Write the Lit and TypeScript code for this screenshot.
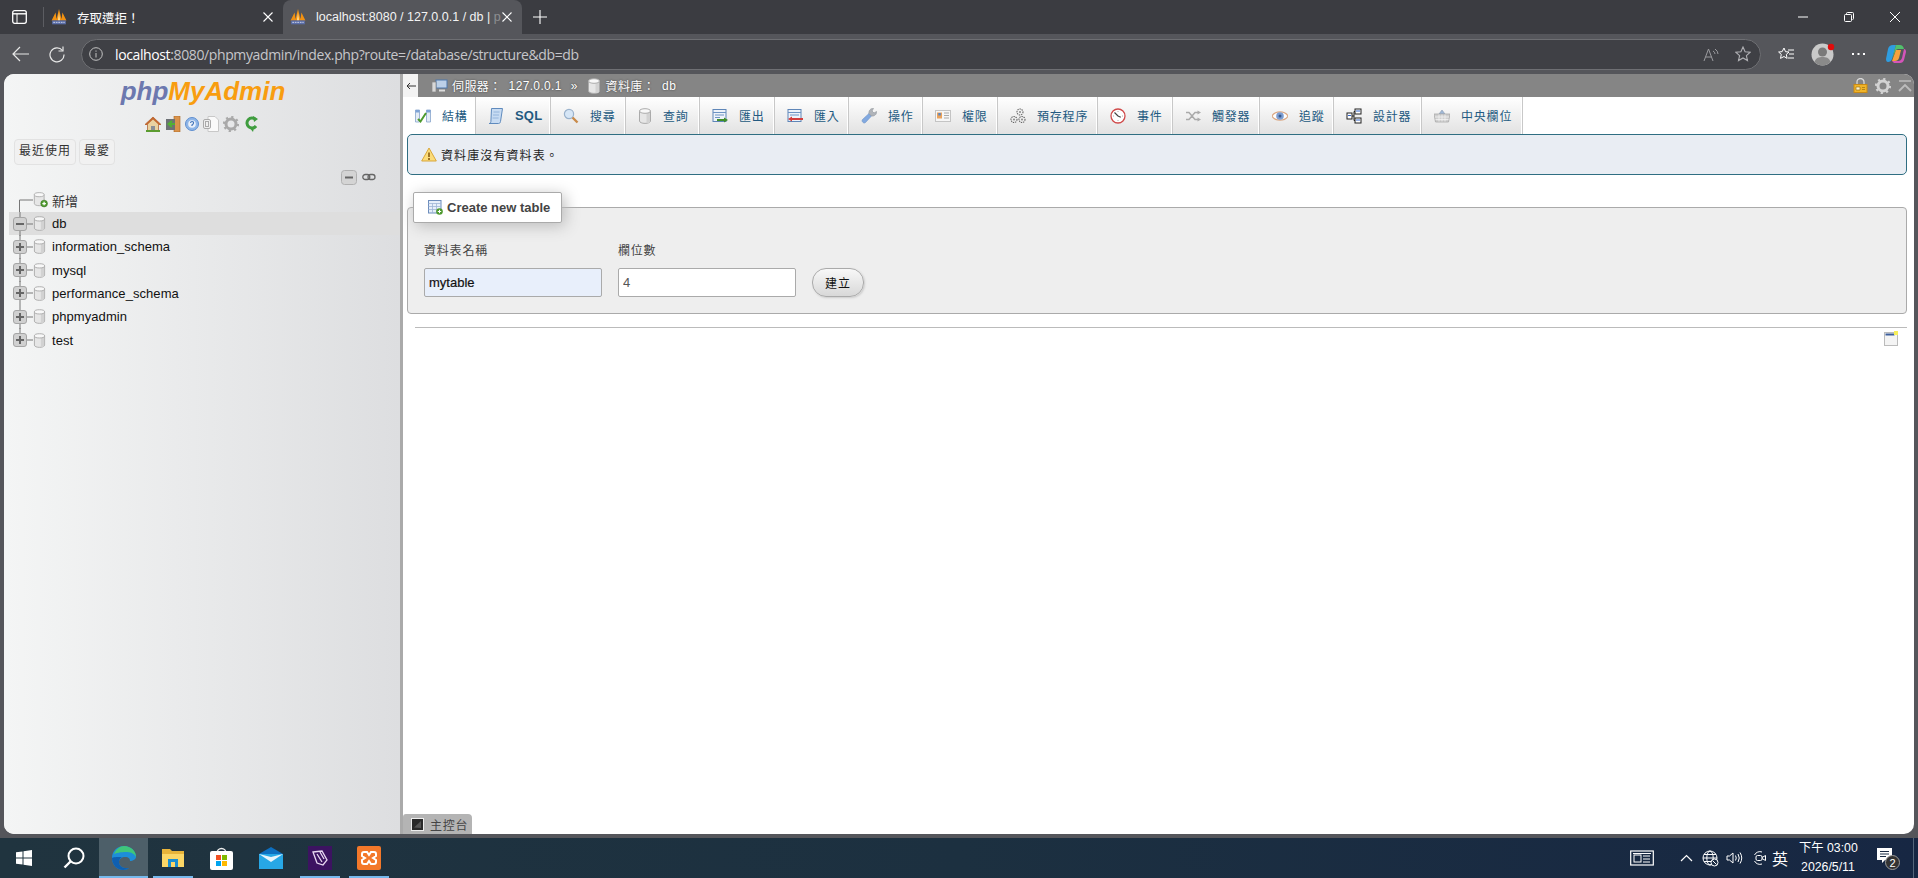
import { LitElement, html, css, svg } from 'lit';
import { customElement } from 'lit/decorators.js';

// small helper so every icon is an inline svg of a given box
const ic = (w: number, h: number, body: unknown, cls = '') =>
  html`<svg class="ic ${cls}" width=${w} height=${h} viewBox="0 0 ${w} ${h}">${body}</svg>`;

const pmaFav = ic(14, 14, svg`
  <path d="M.5 10 4 3l1 7zM4.500 10 7 0l2.500 10zM9 10l1-7 3.500 7z" fill="#f29111"/>
  <path d="M6 10 7 3l1 7z" fill="#ffd98a"/>
  <rect x="1" y="10" width="12" height="3.400" fill="#5b6ea8"/>
  <path d="M2 11.700h10" stroke="#cfd6ea" stroke-width=".8" stroke-dasharray="1.500 .7"/>`);

const dbIcon = ic(14, 16, svg`
  <path d="M1.500 3v10c0 1.400 2.500 2.400 5.500 2.400s5.500-1 5.500-2.400V3z" fill="#e6e6e6" stroke="#ababab"/>
  <path d="M8.500 4v11h2.500l1-1V4z" fill="#d2d2d2"/>
  <ellipse cx="7" cy="3" rx="5.500" ry="2.300" fill="#f8f8f8" stroke="#ababab"/>`, 'db');

const dbAdd = ic(18, 18, svg`
  <path d="M1.500 3v10c0 1.400 2.500 2.400 5.500 2.400s5.500-1 5.500-2.400V3z" fill="#e6e6e6" stroke="#ababab"/>
  <ellipse cx="7" cy="3" rx="5.500" ry="2.300" fill="#f8f8f8" stroke="#ababab"/>
  <circle cx="12.500" cy="13" r="3.800" fill="#4f9a2f" stroke="#35701c" stroke-width=".6"/>
  <path d="M10.500 13h4M12.500 11v4" stroke="#fff" stroke-width="1.400"/>`, 'dbadd');

const tabIcons: Record<string, unknown> = {
  structure: ic(16, 16, svg`
    <path d="M.5 2h4v12h-4zM11.500 2h4v12h-4z" fill="#e4ecf6" stroke="#86a5cc" stroke-width=".8"/>
    <path d="M.5 2h4v2.500h-4zM11.500 2h4v2.500h-4z" fill="#7ea3d6"/>
    <path d="M3 11l2.500 2.500L11 5" stroke="#4d9a2d" stroke-width="2" fill="none"/>`),
  sql: ic(16, 18, svg`
    <path d="M3.500 1.500h11l-2 13c-.2 1.400-1 2-2 2H1c1 0 1.700-.6 1.900-2z" fill="#c7dbf2" stroke="#5f8abd"/>
    <path d="M5.500 5h6M5 8h6M4.600 11h6" stroke="#8fb0d8" stroke-width=".9"/>`),
  search: ic(16, 16, svg`
    <circle cx="6" cy="6" r="4.600" fill="#d6e6f6" stroke="#9ab2cc" stroke-width="1.200"/>
    <path d="M9.500 9.500l5 5" stroke="#c98b4a" stroke-width="2.400"/>`),
  query: dbIcon,
  export: ic(16, 16, svg`
    <rect x="1" y="1.500" width="13" height="12" fill="#eef3fa" stroke="#5f86b8"/>
    <path d="M1 4.500h13M3 7h9M3 9.500h5" stroke="#6e94c4"/>
    <path d="M5 12h8" stroke="#3f8f2a" stroke-width="2"/><path d="M12 9.500l4 2.500-4 2.500z" fill="#3f8f2a"/>`),
  import: ic(16, 16, svg`
    <rect x="1" y="1.500" width="13" height="12" fill="#eef3fa" stroke="#5f86b8"/>
    <path d="M1 4.500h13M3 7h9" stroke="#6e94c4"/>
    <path d="M4 11h12" stroke="#d33d3d" stroke-width="2"/><path d="M5 8.500 1 11l4 2.500z" fill="#d33d3d"/>`),
  ops: ic(16, 16, svg`
    <path d="M1.500 11.500 8 5.500l2.500 2.500-6 6.500c-1.500 1.500-4.500-1-3-3z" fill="#82a9e0" stroke="#6d93c8" stroke-width=".6"/>
    <path d="M8 5.500C7.500 3 9.500 0 12.500.5L11 3l2 2 2.500-1.500C16 6.500 13 8.500 10.500 8z" fill="#b0b4ba" stroke="#8f9399" stroke-width=".6"/>`),
  rights: ic(16, 12, svg`
    <rect x=".5" y=".5" width="15" height="11" fill="#f6f6f6" stroke="#c4c4c4"/>
    <rect x="2" y="2.500" width="5" height="6" fill="#eba25a"/><rect x="3.300" y="3" width="2.500" height="2.500" fill="#5a86c2"/>
    <path d="M9 3h5M9 5.500h5M9 8h5" stroke="#aaa"/>`),
  routines: ic(16, 16, svg`
    <g fill="none" stroke="#666" stroke-width="1.100" stroke-dasharray="1.400 .8">
    <circle cx="4" cy="11.500" r="3"/><circle cx="12" cy="11.500" r="3"/><circle cx="10" cy="4" r="3"/></g>
    <circle cx="4" cy="11.500" r="1" fill="#888"/><circle cx="12" cy="11.500" r="1" fill="#888"/><circle cx="10" cy="4" r="1" fill="#888"/>`),
  events: ic(16, 16, svg`
    <circle cx="8" cy="8" r="7" fill="#fff" stroke="#d04a4a" stroke-width="1.300"/>
    <path d="M4.500 4.500 8 8l2.800 1.200" stroke="#444" stroke-width="1.200" fill="none"/>
    <path d="M8 3v1M8 12v1M3 8h1M12 8h1" stroke="#999" stroke-width=".8"/>`),
  triggers: ic(16, 12, svg`
    <path d="M1 2.500h3l6 7h3M1 9.500h3l6-7h3" stroke="#aaa" stroke-width="1.500" fill="none"/>
    <path d="M12.500 .5 16 2.500l-3.500 2zM12.500 7.500l3.500 2-3.500 2z" fill="#aaa"/>`),
  track: ic(16, 12, svg`
    <path d="M0 6c3-5.500 13-5.500 16 0-3 5.500-13 5.500-16 0z" fill="#fff" stroke="#dba884" stroke-width="1.200"/>
    <circle cx="8" cy="6" r="3.800" fill="#7c9dd2"/><circle cx="8" cy="6" r="1.500" fill="#3a5a8a"/>`),
  designer: ic(16, 16, svg`
    <g fill="#fff" stroke="#222"><rect x="9" y="1" width="6" height="5"/><rect x="9" y="10" width="6" height="5"/><rect x="1" y="5" width="5" height="6"/></g>
    <path d="M6 8h2M8 3.500v9M8 3.500h1M8 12.500h1" stroke="#222" fill="none"/>
    <path d="M10 3h4M10 12h4M2 7.500h3" stroke="#36c"/>`),
  central: ic(16, 14, svg`
    <path d="M5 5 8 1l3 4z" fill="#9fb8d8" stroke="#8a9ab0" stroke-width=".6"/>
    <path d="M0 5h16l-1.500 8h-13z" fill="#cfcfcf" stroke="#a8a8a8" stroke-width=".8"/>
    <path d="M1 8h14M1.500 10.500h13M5 5.500v7M8 5.500v7M11 5.500v7" stroke="#f2f2f2" stroke-width=".8"/>`),
};

const tabs = [
  { key: 'structure', label: '結構', w: 73, active: true },
  { key: 'sql', label: 'SQL', w: 75 },
  { key: 'search', label: '搜尋', w: 75 },
  { key: 'query', label: '查詢', w: 74 },
  { key: 'export', label: '匯出', w: 75 },
  { key: 'import', label: '匯入', w: 74 },
  { key: 'ops', label: '操作', w: 74 },
  { key: 'rights', label: '權限', w: 75 },
  { key: 'routines', label: '預存程序', w: 100 },
  { key: 'events', label: '事件', w: 75 },
  { key: 'triggers', label: '觸發器', w: 87 },
  { key: 'track', label: '追蹤', w: 74 },
  { key: 'designer', label: '設計器', w: 88 },
  { key: 'central', label: '中央欄位', w: 101 },
];

const databases = [
  { name: 'db', open: true },
  { name: 'information_schema' },
  { name: 'mysql' },
  { name: 'performance_schema' },
  { name: 'phpmyadmin' },
  { name: 'test', last: true },
];

const gear = (c: string) => ic(16, 16, svg`
  <circle cx="8" cy="8" r="5" fill="none" stroke=${c} stroke-width="3"/>
  <circle cx="8" cy="8" r="7" fill="none" stroke=${c} stroke-width="2.200" stroke-dasharray="2.200 3.300"/>`);

const rail = (open: boolean, last: boolean) => ic(24, 24, svg`
  <path d="M11 0V${last ? 12 : 24}M18 12h6" stroke="#777" fill="none"/>
  <rect x="4.500" y="5.500" width="13" height="13" rx="2.500" fill="#d0d0d0" stroke="#a5a5a5"/>
  <path d="M7 12h8${open ? '' : 'M11 8v8'}" stroke="#666" stroke-width="2"/>`, 'rail');

@customElement('app-root')
export class AppRoot extends LitElement {
  static styles = css`
    :host { display: block; width: 1918px; height: 878px; overflow: hidden;
      font-family: "Liberation Sans", "Noto Sans CJK TC", sans-serif; }
    * { box-sizing: border-box; }
    .ic { display: block; flex: none; }
    .page { height: 878px; display: flex; flex-direction: column; background: #55565b; }

    /* browser chrome */
    .strip { height: 34px; background: #3b3c41; display: flex; align-items: center; color: #fff; font-size: 12.500px; }
    .panel { width: 44px; padding-left: 12px; border-right: 1px solid #5c5d62; height: 20px; display: flex; align-items: center; }
    .btab { width: 239px; height: 34px; display: flex; align-items: center; padding-left: 7px; }
    .btab .fav { margin-right: 10px; }
    .btab .fav svg { width: 16px; height: 16px; }
    .btab .title { flex: 1; white-space: nowrap; }
    .btab .x { width: 10px; margin-right: 10px; }
    .btab.cur { background: #55565b; border-radius: 8px 8px 0 0; }
    .btab.cur .title { color: #f3f3f3; }
    .btab.cur .title i { font-style: normal; opacity: .35; }
    .plus { margin-left: 11px; }
    .winbtns { margin-left: auto; display: flex; align-items: center; }
    .wmin, .wmax { margin-right: 36px; }
    .wclose { margin-right: 18px; }

    .bar { height: 40px; display: flex; align-items: center; padding-left: 12px; }
    .back { margin-right: 19px; }
    .reload { margin-right: 16px; }
    .addr { width: 1680px; height: 31px; border: 1px solid #6e6f73; border-radius: 16px; background: #3f4045;
      display: flex; align-items: center; padding: 0 9px 0 7px; margin-right: 17px; }
    .info { margin-right: 12px; }
    .url { font: 14px "Open Sans", sans-serif; color: #c6c6ca; letter-spacing: -0.380px; white-space: nowrap; flex: 1; }
    .url b { font-weight: 400; color: #fff; }
    .read { margin-right: 16px; }
    .tools { display: flex; align-items: center; }
    .favs { margin-right: 16px; }
    .avatar { margin-right: 17px; }
    .dots { margin-right: 20px; }

    /* viewport */
    .view { height: 760px; margin: 0 4px 4px; display: flex; border-radius: 10px; overflow: hidden; background: #fff; }
    .side { width: 396px; background: linear-gradient(90deg, #f4f5f5, #dddee0); display: flex; flex-direction: column; font-size: 13px; color: #111; }
    .split { width: 3px; background: #aaa; }
    .logo { height: 36px; padding: 2px 0 0 2px; text-align: center; font: italic bold 26px "Liberation Sans", sans-serif; color: #f89d10; }
    .logo span { color: #6c78af; }
    .navi { height: 27px; display: flex; justify-content: center; align-items: center; gap: 4px; padding-right: 2px; }
    .navi .rel { margin-left: 2px; }
    .recent { display: flex; gap: 3px; padding-left: 10px; margin-top: 2px; }
    .recent div { height: 26px; padding: 0 4px; background: #f1f1f1; border: 1px solid #e2e2e2; border-radius: 4px; font-size: 12px; letter-spacing: 1px; color: #333; line-height: 23px; }
    .ctl { display: flex; justify-content: flex-end; align-items: center; gap: 5px; padding-right: 24px; margin-top: 2px; height: 20px; }
    .tree { margin: 1.500px 0 0 5px; }
    .row { height: 23.330px; display: flex; align-items: center; }
    .row.on { background: #dedede; }
    .row .db { width: 13px; height: 15px; }
    .row .nm { margin-left: 6px; letter-spacing: .06px; }
    .row.add { padding-left: 9px; }
    .row.add .dbadd { width: 16px; height: 16px; }
    .row.add .nm { margin-left: 3px; color: #333; }

    .main { flex: 1; display: flex; flex-direction: column; position: relative; min-width: 0; }
    .crumb { height: 23px; background: #858585; display: flex; align-items: center; color: #fff; font-size: 12px; text-shadow: 0 0 2px #333; }
    .toggle { width: 15px; height: 23px; background: #f3f3f3; display: flex; align-items: center; justify-content: center; margin-right: 14px; }
    .srv { margin-right: 4px; }
    .crumb .db { margin-right: 5px; }
    .cjk { letter-spacing: .4px; }
    .crumb .v { margin-left: 7px; letter-spacing: .35px; }
    .crumb .sep { margin: 0 9px; }
    .rt { margin-left: auto; display: flex; align-items: center; gap: 7px; padding-right: 2px; }
    .tabs { height: 37px; display: flex; background: #fff; }
    .tab { height: 37px; display: flex; align-items: center; padding-left: 12px; gap: 11px; color: #235a81; font-size: 12px; letter-spacing: .8px; white-space: nowrap;
      background: linear-gradient(#fff, #e2e2e2); border-right: 1px solid #c8c8c8; box-shadow: inset -1px 0 0 #fff; }
    .tab.on { background: #fff; }
    .tab .lat { font-weight: bold; font-size: 13px; letter-spacing: .2px; }
    .body { padding: 0 7px 0 4px; }
    .notice { height: 41px; border: 1px solid #2f6e82; border-radius: 5px; background: #e9edf3; display: flex; align-items: center; padding-left: 13px; gap: 4px; font-size: 12px; letter-spacing: 1.100px; color: #222; }
    .create { margin-top: 32px; height: 107px; border: 1px solid #aaa; border-radius: 4px; background: #eee; position: relative; padding: 33px 0 0 16px; color: #444; font-size: 12px; }
    .legend { position: absolute; left: 5px; top: -16px; width: 149px; height: 31px; background: #fff; border: 1px solid #aaa; border-radius: 2px; box-shadow: 3px 3px 15px #bbb; display: flex; align-items: center; padding-left: 14px; gap: 4px; font: bold 13px "Liberation Sans", sans-serif; color: #444; }
    .labels, .fields { display: flex; gap: 16px; align-items: center; }
    .labels { height: 16px; }
    .labels div { width: 178px; letter-spacing: .8px; }
    .fields { margin-top: 11px; }
    input { width: 178px; height: 29px; border: 1px solid #aaa; border-radius: 2px; padding: 0 4px; font: 13px "Liberation Sans", sans-serif; background: #fff; color: #555; outline: none; }
    input.first { background: #e8effb; color: #111; -webkit-text-stroke: .2px #111; }
    .go { width: 52px; height: 29px; border: 1px solid #aaa; border-radius: 14px; background: linear-gradient(#f8f8f8, #d8d8d8); color: #111; font-size: 12px; letter-spacing: 1px; display: flex; align-items: center; justify-content: center; box-shadow: 1px 1px 2px #ccc; }
    hr { margin: 13px 0 0 8px; border: 0; border-top: 1px solid #bbb; }
    .note { display: flex; justify-content: flex-end; padding: 3px 9px 0 0; }
    .console { position: absolute; left: 0; bottom: 0; width: 69px; height: 20px; background: #b4b4b4; border-radius: 3px 4px 0 0; display: flex; align-items: center; padding-left: 8px; gap: 6px; font-size: 12px; letter-spacing: .8px; color: #444; }

    /* taskbar */
    .task { height: 40px; background: linear-gradient(90deg, #20343f, #1c3040 50%, #172743); display: flex; align-items: stretch; color: #fff; }
    .slot { width: 49px; display: flex; align-items: center; justify-content: center; position: relative; }
    .slot.st { width: 48px; }
    .slot.se { width: 51px; }
    .slot.on { background: #4d5f69; }
    .slot.ru::after { content: ""; position: absolute; left: 4.500px; right: 4.500px; bottom: 0; height: 2px; background: #76b9ed; }
    .slot.on::after { left: 0; right: 0; }
    .tray { margin-left: auto; display: flex; align-items: center; }
    .tnews { margin-right: 26px; }
    .tchev { margin-right: 9px; }
    .tglobe { margin-right: 7px; }
    .tvol { margin-right: 10px; }
    .tmeet { margin-right: 5px; }
    .lang { font-size: 16px; margin-right: 11px; }
    .clock { font-size: 12.300px; line-height: 19px; text-align: center; width: 58px; margin-right: 20px; white-space: nowrap; }
    .bell { margin-right: 13px; }
    .edge { width: 5px; height: 40px; border-left: 1px solid #54657a; }
  `;

  render() {
    return html`
      <div class="page">
        ${this.renderStrip()}
        ${this.renderBar()}
        <div class="view">
          ${this.renderSide()}
          <div class="split"></div>
          ${this.renderMain()}
        </div>
        ${this.renderTask()}
      </div>
    `;
  }

  renderStrip() {
    const close = ic(10, 10, svg`<path d="M.5.5l9 9M9.500.5l-9 9" stroke="#fff" stroke-width="1.100"/>`);
    return html`
      <div class="strip">
        <div class="panel">${ic(15, 14, svg`<rect x=".7" y=".7" width="13.600" height="12.600" rx="2" fill="none" stroke="#fff" stroke-width="1.300"/><path d="M1 3.800h13" stroke="#fff" stroke-width="1.400"/><path d="M5 3.800V13" stroke="#fff"/>`)}</div>
        <div class="btab"><span class="fav">${pmaFav}</span><span class="title">存取遭拒！</span><span class="x">${close}</span></div>
        <div class="btab cur"><span class="fav">${pmaFav}</span><span class="title">localhost:8080 / 127.0.0.1 / db | <i>p</i></span><span class="x">${close}</span></div>
        <span class="plus">${ic(14, 14, svg`<path d="M7 0v14M0 7h14" stroke="#fff" stroke-width="1.100"/>`)}</span>
        <div class="winbtns">
          <span class="wmin">${ic(10, 2, svg`<path d="M0 1h10" stroke="#fff"/>`)}</span>
          <span class="wmax">${ic(10, 10, svg`<rect x=".5" y="2.500" width="7" height="7" rx="1" fill="none" stroke="#fff"/><path d="M2.500 2.500V1.500q0-1 1-1h5q1 0 1 1v5q0 1-1 1" fill="none" stroke="#fff"/>`)}</span>
          <span class="wclose">${ic(10, 10, svg`<path d="M0 0l10 10M10 0 0 10" stroke="#fff"/>`)}</span>
        </div>
      </div>
    `;
  }

  renderBar() {
    return html`
      <div class="bar">
        <span class="back">${ic(17, 16, svg`<path d="M17 8H1M8 1 1 8l7 7" stroke="#e8e8e8" fill="none" stroke-width="1.200"/>`)}</span>
        <span class="reload">${ic(17, 17, svg`<path d="M14.500 4.500A7 7 0 1 0 16 8.500" stroke="#e8e8e8" fill="none" stroke-width="1.200"/><path d="M15 .5v4.500h-4.500" stroke="#e8e8e8" fill="none" stroke-width="1.200"/>`)}</span>
        <div class="addr">
          <span class="info">${ic(14, 14, svg`<circle cx="7" cy="7" r="6.300" fill="none" stroke="#c4c4c4"/><path d="M7 6v4.500M7 3.500v1.200" stroke="#c4c4c4"/>`)}</span>
          <span class="url"><b>localhost</b>:8080/phpmyadmin/index.php?route=/database/structure&amp;db=db</span>
          <span class="read">${ic(16, 16, svg`<path d="M1 15 5.500 3 10 15M2.700 11h6" fill="none" stroke="#9b9b9f"/><path d="M10 5q2 1 2 3M12 3q3 2 3 5" fill="none" stroke="#9b9b9f"/>`)}</span>
          ${ic(16, 16, svg`<path d="M8 1l2.100 4.700 5.100.5-3.800 3.400 1.100 5L8 12l-4.500 2.600 1.100-5L.8 6.200l5.100-.5z" fill="none" stroke="#b0b0b4" stroke-width="1.100"/>`)}
        </div>
        <div class="tools">
          <span class="favs">${ic(17, 16, svg`<path d="M6 2l1.500 3.700 3.500.3-2.700 2.400.8 4L6 10.500 2.500 12.400l.8-4L.6 6l3.500-.3z" fill="none" stroke="#fff"/><path d="M10 4h6M11 8h5M10 12h6" stroke="#fff"/>`)}</span>
          <span class="avatar">${ic(24, 24, svg`<circle cx="11.500" cy="12.500" r="11" fill="#c9c9c9"/><circle cx="11.500" cy="10" r="4.500" fill="#7a7a7a"/><path d="M3.500 20c1.500-4.500 4.500-5 8-5s6.500.5 8 5a11 11 0 0 1-16 0z" fill="#8a8a8a"/><circle cx="20" cy="5" r="3.200" fill="#e00b0b"/>`)}</span>
          <span class="dots">${ic(13, 4, svg`<path d="M0 2h2M5.500 2h2M11 2h2" stroke="#fff" stroke-width="2"/>`)}</span>
          ${ic(22, 20, svg`
            <path d="M3 5Q4 1 8 1h3L7 15q-1 3-4 3-2 0-2-3z" fill="#2f9de0"/>
            <path d="M7 15 11 1h4q3 0 4 4l-6 0q-2 0-3 3z" fill="#52c06c"/>
            <path d="M9 19h6q3 0 4-3l2-8q0-3-2-3l-2 9q-1 3-4 3H7z" fill="#d455b9"/>
            <path d="M11 6h5l-2 8q-1 3-4 3H7z" fill="#f7a23b"/>`)}
        </div>
      </div>
    `;
  }

  renderSide() {
    return html`
      <aside class="side">
        <div class="logo"><span>php</span>MyAdmin</div>
        <div class="navi">
          ${ic(16, 16, svg`<path d="M8 1 0 8.500h2.500V15h11V8.500H16z" fill="#ead2a0" stroke="#a5562a" stroke-width=".7"/><path d="M8 1 0 8.500 2 9l6-5.500L14 9l2-.5z" fill="#c2672f"/><rect x="6" y="10" width="4" height="5" fill="#8a8f96"/><path d="M1 15h14" stroke="#5b9b2f" stroke-width="2"/>`)}
          ${ic(16, 16, svg`<rect x="9" y="0" width="6" height="16" fill="#d9934c" stroke="#a86424" stroke-width=".6"/><rect x="1" y="3" width="9" height="11" fill="#6d7175"/><path d="M10 8H4M7 5 3.500 8 7 11" stroke="#52b034" stroke-width="2" fill="none"/>`)}
          ${ic(14, 14, svg`<circle cx="7" cy="7" r="6.500" fill="#8fb6e8" stroke="#5f8fcf"/><circle cx="7" cy="7" r="3.800" fill="#e9f0fa"/><path d="M5.500 6q.3-1.500 1.500-1.500 1.700 0 1.500 1.500T7 8v1" fill="none" stroke="#3f72b8" stroke-width="1.200"/>`)}
          ${ic(16, 16, svg`<path d="M5 .5h7l3.500 3.500v11.500H5z" fill="#fafafa" stroke="#c8c8c8"/><rect x=".5" y="3.500" width="7" height="9" rx="1.500" fill="#efefef" stroke="#aaa"/><rect x="2.500" y="5.500" width="3" height="5" fill="none" stroke="#aaa"/>`)}
          ${gear('#a9a9a9')}
          <span class="rel">${ic(13, 16, svg`<path d="M10.500 3.500A5 5 0 1 0 11 10" fill="none" stroke="#3f9d3f" stroke-width="3"/><path d="M8 0l5 3-4 3zM4 11l5 1-1 4z" fill="#3f9d3f"/>`)}</span>
        </div>
        <div class="recent"><div>最近使用</div><div>最愛</div></div>
        <div class="ctl">
          ${ic(16, 16, svg`<rect x=".5" y="1.500" width="15" height="14" rx="3" fill="#d4d4d4" stroke="#b0b0b0"/><path d="M4 8.500h8" stroke="#666" stroke-width="2"/>`)}
          ${ic(14, 10, svg`<rect x=".8" y="2.500" width="7" height="5" rx="2.500" fill="none" stroke="#666" stroke-width="1.300"/><rect x="6" y="2.500" width="7" height="5" rx="2.500" fill="none" stroke="#666" stroke-width="1.300"/>`)}
        </div>
        <div class="tree">
          <div class="row add">
            ${ic(15, 24, svg`<path d="M1.500 24V12h13.500" stroke="#777" fill="none"/>`)}
            ${dbAdd}
            <span class="nm">新增</span>
          </div>
          ${databases.map(d => html`
            <div class="row ${d.open ? 'on' : ''}">
              ${rail(!!d.open, !!d.last)}
              ${dbIcon}
              <span class="nm">${d.name}</span>
            </div>`)}
        </div>
      </aside>
    `;
  }

  renderMain() {
    return html`
      <main class="main">
        <div class="crumb">
          <div class="toggle">${ic(10, 8, svg`<path d="M10 4H1M4 1 1 4l3 3" stroke="#333" fill="none"/>`)}</div>
          <span class="srv">${ic(16, 14, svg`<rect x="4" y="1" width="11" height="8" fill="#bcd0e8" stroke="#4f78ac"/><rect x="0" y="3" width="4" height="10" fill="#d8d8d8" stroke="#888" stroke-width=".7"/><path d="M7 11.500h6" stroke="#ddd" stroke-width="2"/>`)}</span>
          <span class="cjk">伺服器：</span><span class="v">127.0.0.1</span>
          <span class="sep">»</span>
          ${dbIcon}
          <span class="cjk">資料庫：</span><span class="v">db</span>
          <div class="rt">
            ${ic(15, 15, svg`<path d="M4 7V4a3.500 3.500 0 0 1 7 0v3" fill="none" stroke="#d8d8d8" stroke-width="1.300"/><rect x="1" y="6.500" width="13" height="8" fill="#f0b429" stroke="#c98a14"/><path d="M3 9h4v3H3zM9 9.500h3M9 11.500h3" fill="#fff3c8" stroke="#8a6510" stroke-width=".6"/>`)}
            ${gear('#d2d2d2')}
            ${ic(14, 12, svg`<path d="M1 1h12" stroke="#bdbdbd" stroke-width="1.400"/><path d="M1 11l6-6 6 6" stroke="#bdbdbd" stroke-width="1.800" fill="none"/>`)}
          </div>
        </div>
        <nav class="tabs">
          ${tabs.map(t => html`
            <div class="tab ${t.active ? 'on' : ''}" style="width:${t.w}px">
              ${tabIcons[t.key]}
              <span class=${t.key === 'sql' ? 'lat' : ''}>${t.label}</span>
            </div>`)}
        </nav>
        <div class="body">
          <div class="notice">
            ${ic(16, 15, svg`<path d="M8 1 .7 14h14.600z" fill="#fbdc7a" stroke="#d9a73a" stroke-linejoin="round"/><path d="M8 5.500v4.500M8 11v2" stroke="#8a5c10" stroke-width="1.600"/>`)}
            <span>資料庫沒有資料表。</span>
          </div>
          <div class="create">
            <div class="legend">
              ${ic(15, 15, svg`<rect x=".5" y=".5" width="12.500" height="12.500" fill="#e6eefa" stroke="#6d8dbc"/><path d="M.5 3.500h12.500M.5 6.500h12.500M.5 9.500h12.500M4.500 3.500v9.500M8.500 3.500v9.500" stroke="#9db4d6" stroke-width=".8"/><circle cx="11.500" cy="11.500" r="3.300" fill="#4f9a2f"/><path d="M9.800 11.500h3.400M11.500 9.800v3.400" stroke="#fff"/>`)}
              Create new table
            </div>
            <div class="labels"><div>資料表名稱</div><div>欄位數</div></div>
            <div class="fields">
              <input class="first" .value=${'mytable'}>
              <input .value=${'4'}>
              <div class="go">建立</div>
            </div>
          </div>
          <hr>
          <div class="note">${ic(14, 15, svg`<rect x=".5" y="1.500" width="13" height="13" fill="#f4f4f4" stroke="#bbb"/><rect x="1.500" y="2.500" width="9" height="2" fill="#3d5f9c"/><rect x="10" y="0" width="4" height="4" fill="#f6ee5a"/>`)}</div>
        </div>
        <div class="console">
          ${ic(13, 13, svg`<rect x=".5" y=".5" width="12" height="12" fill="#2a2a2a" stroke="#eee"/><path d="M3 9.500 10 3v7z" fill="#555"/>`)}
          <span>主控台</span>
        </div>
      </main>
    `;
  }

  renderTask() {
    return html`
      <footer class="task">
        <div class="slot st">${ic(16, 16, svg`<path d="M0 2.300 6.500 1.400V7.500H0zM7.500 1.300 16 0v7.500H7.500zM0 8.500h6.500v6.100L0 13.700zM7.500 8.500H16V16l-8.500-1.300z" fill="#fff"/>`)}</div>
        <div class="slot se">${ic(22, 22, svg`<circle cx="13" cy="9" r="7.500" fill="none" stroke="#fff" stroke-width="2"/><path d="M7.500 14.500 1.500 20.500" stroke="#fff" stroke-width="2.400"/>`)}</div>
        <div class="slot on ru">${ic(24, 24, svg`
          <path d="M12 0C5 0 0 5 0 12c0 7 5 12 11 12 3 0 5-1 6-2-6 1-10-2-10-6 0-3 3-5 6-5 4 0 5 2 5 4 3 0 6-2 6-4C24 5 19 0 12 0z" fill="#1d8ed8"/>
          <path d="M2 8C4 3 8 0 12 0c7 0 12 5 12 11-2-4-6-5-10-5-5 0-10 1-12 2z" fill="#3fc67a"/>
          <path d="M0 12c0 7 5 12 11 12 3 0 5-1 6-2-6 1-10-2-10-6 0-2 1-4 3-5-6 0-9 0-10 1z" fill="#0f5fb0"/>`)}</div>
        <div class="slot ru">${ic(22, 20, svg`<path d="M0 1h8l2 2h12v16H0z" fill="#e8b43a"/><path d="M0 6h22v13H0z" fill="#fcd766"/><rect x="6" y="11" width="10" height="8" fill="#1a8fd0"/><rect x="9" y="14" width="4" height="5" fill="#fcd766"/>`)}</div>
        <div class="slot">${ic(23, 24, svg`<path d="M7 7a4.500 4.500 0 0 1 9 0" fill="none" stroke="#eee" stroke-width="1.300"/><rect x="0" y="5" width="23" height="19" rx="2" fill="#fff"/><rect x="6" y="9" width="5" height="5" fill="#f25022"/><rect x="12" y="9" width="5" height="5" fill="#7fba00"/><rect x="6" y="15" width="5" height="5" fill="#00a4ef"/><rect x="12" y="15" width="5" height="5" fill="#ffb900"/>`)}</div>
        <div class="slot">${ic(24, 22, svg`<path d="M12 0 24 7v15H0V7z" fill="#0d6fc0"/><path d="M0 7h24v15H0z" fill="#27a7e6"/><path d="M0 7l12 8 12-8-12 3z" fill="#e8f4fb"/>`)}</div>
        <div class="slot ru">${ic(24, 24, svg`<rect width="24" height="24" fill="#3c1361"/><path d="M5 6l9-1 5 9-4 5-6-2zM9 8l5 8M12 6l4 7" fill="none" stroke="#e9d9f2" stroke-width="1.300"/>`)}</div>
        <div class="slot ru">${ic(24, 24, svg`<rect width="24" height="24" rx="2" fill="#f3782a"/><path d="M7 6h3l2 3 2-3h3a2 2 0 0 1 2 2v2l-3 2 3 2v2a2 2 0 0 1-2 2h-3l-2-3-2 3H7a2 2 0 0 1-2-2v-2l3-2-3-2V8a2 2 0 0 1 2-2z" fill="none" stroke="#fff" stroke-width="2"/>`)}</div>
        <div class="tray">
          <span class="tnews">${ic(24, 16, svg`<rect x=".7" y="1" width="22.600" height="14" fill="none" stroke="#fff" stroke-width="1.200"/><rect x="4" y="5" width="7" height="7" fill="none" stroke="#fff"/><path d="M13 6h7M13 9h7M13 12h7M3 3.500h18" stroke="#fff"/>`)}</span>
          <span class="tchev">${ic(13, 8, svg`<path d="M1 7l5.500-5.500L12 7" stroke="#fff" fill="none" stroke-width="1.200"/>`)}</span>
          <span class="tglobe">${ic(17, 17, svg`<circle cx="8" cy="8" r="7" fill="none" stroke="#fff"/><ellipse cx="8" cy="8" rx="3.200" ry="7" fill="none" stroke="#fff"/><path d="M1 8h14M2 4.500h12M2 11.500h12" stroke="#fff"/><circle cx="12.500" cy="12.500" r="3.500" fill="#1b2c44" stroke="#fff"/><path d="M10.500 10.500l4 4" stroke="#fff"/>`)}</span>
          <span class="tvol">${ic(17, 14, svg`<path d="M1 5h2.500L7 2v10L3.500 9H1z" fill="none" stroke="#fff"/><path d="M9.500 4.500q1.500 2.500 0 5M12 3q2.500 4 0 8M14 1.500q3.500 5.500 0 11" fill="none" stroke="#fff"/>`)}</span>
          <span class="tmeet">${ic(14, 16, svg`<path d="M1.500 5A6 6 0 0 1 9 2M1.500 11A6 6 0 0 0 9 14" fill="none" stroke="#fff"/><rect x="3" y="5.500" width="6" height="5" rx="1.500" fill="none" stroke="#fff"/><path d="M9 7.500l3.500-2v5L9 8.500" fill="none" stroke="#fff"/>`)}</span>
          <span class="lang">英</span>
          <div class="clock">下午 03:00<br>2026/5/11</div>
          <span class="bell">${ic(23, 23, svg`<path d="M0 1h15v12H8l-3 3v-3H0z" fill="#fff"/><path d="M3 4.500h9M3 7h9M3 9.500h6" stroke="#1b2c44"/><circle cx="15.500" cy="15.500" r="7" fill="#333" stroke="#9a9a9a"/><text x="15.500" y="19.500" font-size="11" text-anchor="middle" fill="#fff" font-family="Liberation Sans">2</text>`)}</span>
          <div class="edge"></div>
        </div>
      </footer>
    `;
  }
}
